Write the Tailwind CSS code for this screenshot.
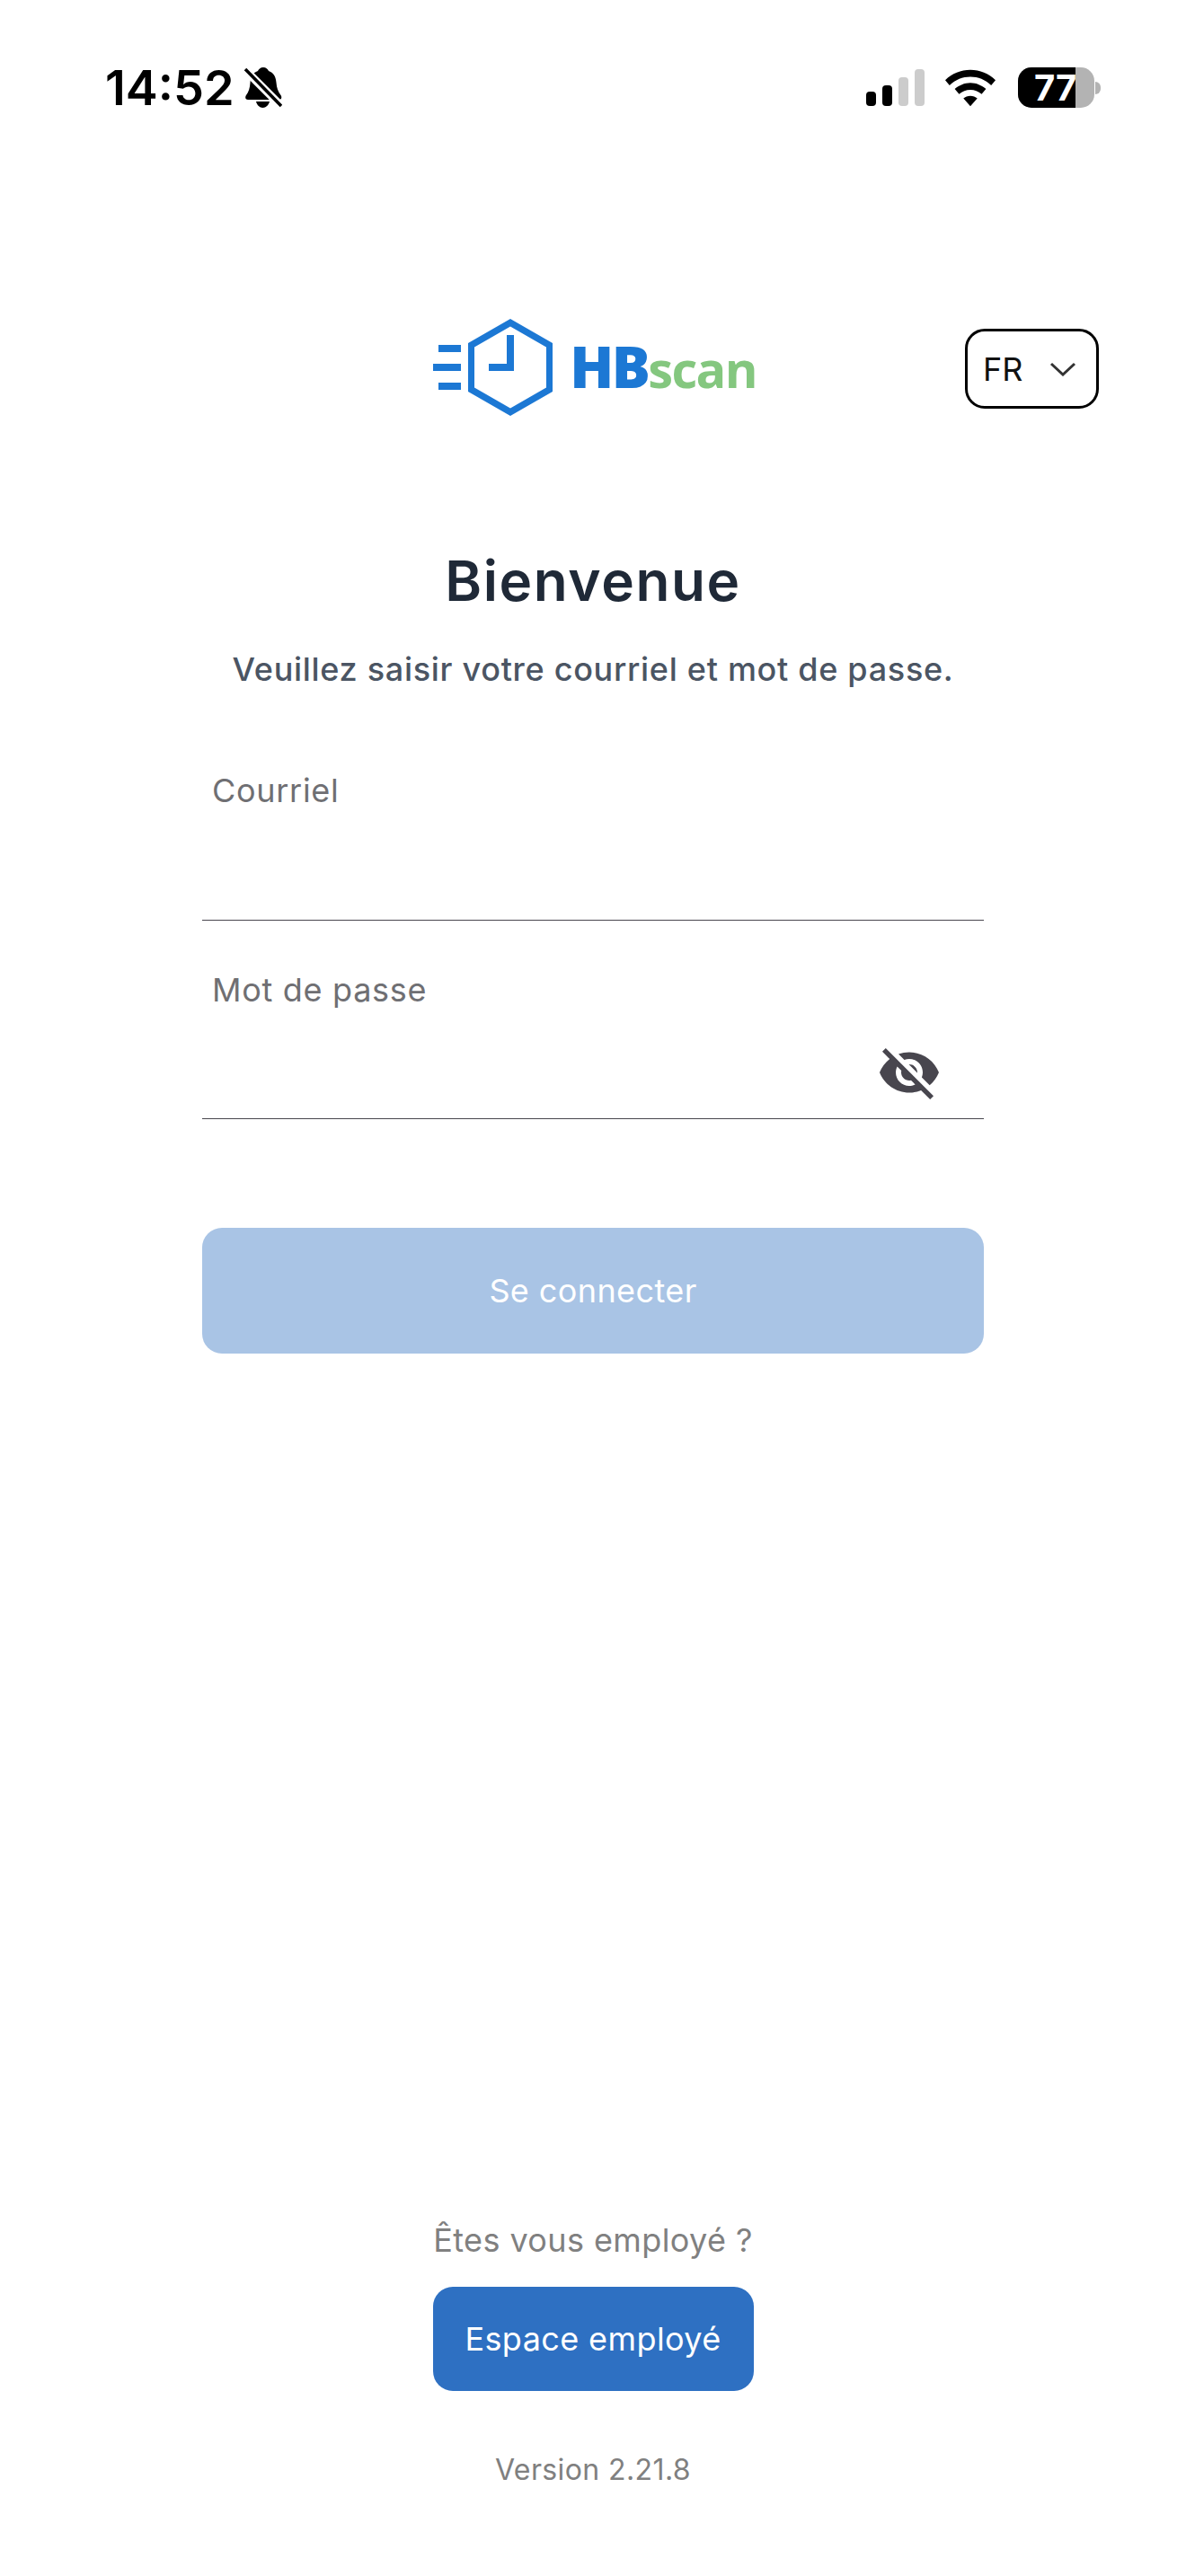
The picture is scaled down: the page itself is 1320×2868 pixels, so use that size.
<!DOCTYPE html>
<html><head><meta charset="utf-8"><script src="https://cdn.jsdelivr.net/npm/@tailwindcss/browser@4"></script></head>
<body class="bg-white font-['Inter','Liberation_Sans',sans-serif]">
<div class="w-[1320px] h-[2868px] flex flex-col overflow-hidden">
  <!-- status bar -->
  <div class="h-[45px] mt-[75px] pl-[117px] pr-[95px] flex justify-between items-center">
    <div class="flex items-center gap-[11px]">
      <span class="text-[54px] leading-[45px] font-semibold text-black">14:52</span>
      <svg width="42" height="45" viewBox="0 0 42 45"><path fill="#000" d="M21 0c3 0 5 2 6 4 6 2 8 7 8.500 13 .5 6 2 10 5 14 1.500 2 1 5-2 5H4c-3 0-3.500-3-2-5 3-4 4-8 4.500-14C7 11 9 6 15 4c1-2 3-4 6-4zM13 38h15c-1 4-4 7-7.500 7S14 42 13 38z"/><path stroke="#fff" stroke-width="9" d="M0 2l42 42"/><path stroke="#000" stroke-width="3.500" d="M1 2l40 41"/></svg>
    </div>
    <div class="flex items-center">
      <svg width="65" height="41" viewBox="0 0 65 41"><rect x="0" y="25" width="11" height="16" rx="4" fill="#000"/><rect x="18" y="18" width="11" height="23" rx="4" fill="#000"/><rect x="36" y="9" width="11" height="32" rx="4" fill="#ccc"/><rect x="54" y="0" width="11" height="41" rx="4" fill="#ccc"/></svg>
      <svg width="56" height="42" viewBox="0 0 58 42" class="ml-[23px]"><path fill="#000" d="M29 0c11 0 21 4 29 12l-5 6C46 11 38 8 29 8S12 11 5 18l-5-6C8 4 18 0 29 0zM29 15c7 0 13 3 18 7l-5 6c-4-3-8-5-13-5s-9 2-13 5l-5-6c5-4 11-7 18-7zM29 30c3 0 6 1 8 3l-8 9-8-9c2-2 5-3 8-3z"/></svg>
      <div class="ml-[25px] flex items-center">
        <div class="w-[85px] h-[45px] rounded-[15px] overflow-hidden bg-[#b3b3b3] flex">
          <div class="w-[64px] h-full bg-black overflow-hidden pl-[18px] text-[40px] leading-[45px] font-bold text-white whitespace-nowrap">77</div>
        </div>
        <div class="ml-[1px] w-[6px] h-[14px] rounded-r-full bg-[#b3b3b3]"></div>
      </div>
    </div>
  </div>
  <!-- header -->
  <div class="mt-[235px] px-[97px] grid grid-cols-[1fr_auto_1fr] items-center">
    <div></div>
    <div class="ml-[4px] flex items-center h-[108px]">
      <svg width="134" height="108" viewBox="0 0 134 108" class="shrink-0">
        <g fill="#1c78d4">
          <rect x="6" y="29" width="25" height="8"/><rect x="0" y="50" width="31" height="8"/><rect x="6" y="71" width="25" height="8"/>
          <path fill-rule="evenodd" d="M86 0l47 27v54l-47 27-47-27V27zM86 8.500L46 31.500v45l40 23 40-23v-45z"/>
          <path d="M82 18h8v40H62v-8h20z"/>
        </g>
      </svg>
      <span class="ml-[18px] text-[64px] leading-[108px] tracking-[-2.5px] font-extrabold font-['Open_Sans','Noto_Sans',sans-serif] text-[#1c78d4] whitespace-nowrap">HB<span class="text-[56px] tracking-[-1.700px] font-bold text-[#84c77f]">scan</span></span>
    </div>
    <div class="justify-self-end mt-[3px] w-[149px] h-[89px] border-[3px] border-black rounded-[22px] flex items-center justify-between pl-[17px] pr-[22px]">
      <span class="text-[36px] leading-[44px] text-[#111]">FR</span>
      <svg width="30" height="16" viewBox="0 0 30 16"><path d="M2 2l13 12L28 2" fill="none" stroke="#333" stroke-width="3"/></svg>
    </div>
  </div>
  <!-- form -->
  <div class="mt-[139px] mx-auto w-[870px] flex flex-col">
    <h1 class="text-center text-[62px] leading-[90px] font-semibold text-[#1f2937] tracking-[1.6px]">Bienvenue</h1>
    <p class="mt-[23px] text-center text-[36px] leading-[60px] font-medium text-[#4b5563] tracking-[.7px] whitespace-nowrap">Veuillez saisir votre courriel et mot de passe.</p>
    <div class="mt-[83px]">
      <span class="block pl-[11px] text-[36px] leading-[44px] text-[#6f6f73] tracking-[.7px]">Courriel</span>
      <div class="h-[123px] border-b border-[#48464e]"></div>
    </div>
    <div class="mt-[55px]">
      <span class="block pl-[11px] text-[36px] leading-[44px] text-[#6f6f73] tracking-[.7px]">Mot de passe</span>
      <div class="relative h-[122px] border-b border-[#48464e]">
        <svg width="72" height="72" viewBox="0 0 24 24" class="absolute right-[47px] bottom-[15px]"><path fill="#48464e" d="M12 7c2.760 0 5 2.240 5 5 0 .65-.13 1.260-.36 1.830l2.920 2.920c1.510-1.260 2.700-2.890 3.430-4.750-1.730-4.390-6-7.500-11-7.500-1.400 0-2.740.25-3.980.7l2.160 2.160C10.740 7.130 11.350 7 12 7zM2 4.270l2.280 2.280.46.46C3.080 8.300 1.780 10.020 1 12c1.730 4.390 6 7.500 11 7.500 1.550 0 3.030-.3 4.380-.84l.42.42L19.730 22 21 20.730 3.270 3 2 4.270zM7.530 9.800l1.550 1.550c-.05.21-.08.43-.08.65 0 1.660 1.340 3 3 3 .22 0 .44-.03.65-.08l1.550 1.550c-.67.33-1.410.53-2.200.53-2.760 0-5-2.240-5-5 0-.79.2-1.530.53-2.200zm4.310-.78l3.150 3.150.02-.16c0-1.660-1.340-3-3-3l-.17.01z"/></svg>
      </div>
    </div>
    <button class="mt-[121px] h-[140px] rounded-[22px] bg-[#a9c4e5] text-white text-[36px] tracking-[.4px]">Se connecter</button>
  </div>
  <!-- bottom -->
  <div class="mt-auto pb-[96px] flex flex-col items-center">
    <p class="text-[36px] leading-[50px] text-[#808080] tracking-[.4px]">Êtes vous employé ?</p>
    <button class="mt-[27px] w-[357px] h-[116px] rounded-[22px] bg-[#2e70c2] text-white text-[36px] tracking-[.4px]">Espace employé</button>
    <p class="mt-[66px] text-[32px] leading-[44px] text-[#808080] tracking-[.4px]">Version 2.21.8</p>
  </div>
</div>
</body></html>
